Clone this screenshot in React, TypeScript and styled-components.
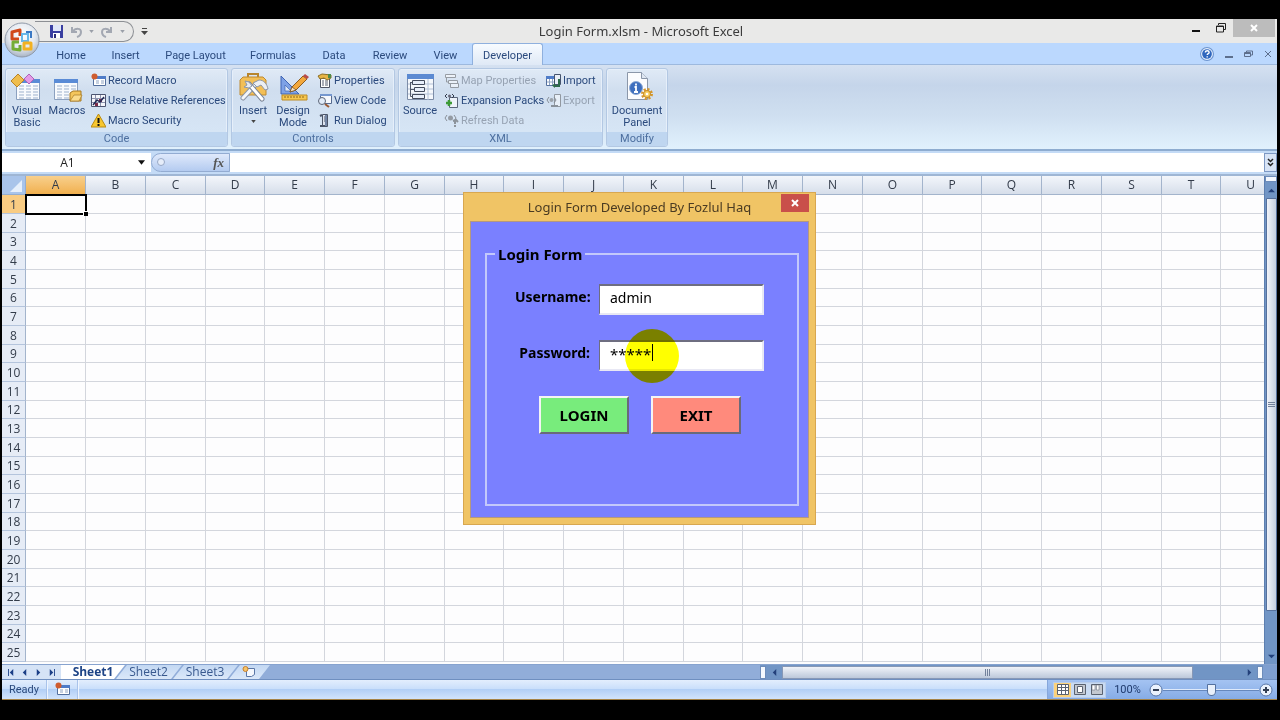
import React from "react";
import styled, { createGlobalStyle, css } from "styled-components";

const ui = `Roboto, "Open Sans", sans-serif`;
const caption = `"Noto Sans", "Open Sans", sans-serif`;
const grid = `"Open Sans", "Noto Sans", sans-serif`;

const Global = createGlobalStyle`
  *, *::before, *::after { box-sizing: border-box; }
  body { margin: 0; background: #000; font-family: ${ui}; font-size: 11px; color: #2b4a7d; }
  button, input { font: inherit; color: inherit; margin: 0; padding: 0; border: 0; background: none; border-radius: 0; }
  button { cursor: pointer; }
  svg { display: block; flex: none; }
`;

const Screen = styled.div`
  min-height: 100vh;
  padding: 19px 3px 20px 2px;
  display: flex;
  flex-direction: column;
  position: relative;
  overflow: hidden;
`;

/* ---------- title bar ---------- */
const TitleBar = styled.header`
  height: 24px;
  display: grid;
  grid-template-columns: 1fr auto 1fr;
  background: #e9e9e8;
`;
const QuickAccess = styled.div`
  display: flex;
  align-items: center;
  padding-left: 33px;
`;
const QuickPill = styled.div`
  height: 21px;
  width: 99px;
  display: flex;
  align-items: center;
  gap: 7px;
  padding-left: 15px;
  border: 1px solid #8c8f94;
  border-left: 0;
  border-radius: 0 11px 11px 0;
  margin-right: 7px;
`;
const WindowTitle = styled.h1`
  margin: 0;
  padding-left: 3px;
  font: 400 13px/25px ${caption};
  color: #3c3c3c;
`;
const WindowButtons = styled.div`
  display: flex;
  justify-content: flex-end;
  padding-right: 2px;
`;
const WindowButton = styled.button<{ $close?: boolean }>`
  height: 18px;
  width: ${(p) => (p.$close ? 42 : 25)}px;
  display: grid;
  place-items: center;
  background: ${(p) => (p.$close ? "#bcbcbc" : "transparent")};
`;
const OfficeButton = styled.button`
  position: absolute;
  left: 4px;
  top: 22px;
  width: 36px;
  height: 36px;
`;

/* ---------- ribbon ---------- */
const TabRow = styled.nav`
  height: 22px;
  display: flex;
  align-items: stretch;
  background: #bbd8fe;
  border-bottom: 1px solid #9db9de;
  padding-left: 41px;
`;
const Tab = styled.button<{ $w: number; $active?: boolean }>`
  width: ${(p) => p.$w}px;
  height: 22px;
  padding-top: 3px;
  white-space: nowrap;
  ${(p) =>
    p.$active &&
    css`
      padding-top: 2px;
      background: linear-gradient(#f7fbff, #dfe9f6);
      border: 1px solid #8fb0de;
      border-bottom: 0;
      border-radius: 3px 3px 0 0;
    `}
`;
const TabTools = styled.div`
  margin-left: auto;
  display: flex;
  align-items: center;
  gap: 11px;
  padding-right: 5px;
`;
const Ribbon = styled.section`
  height: 84px;
  display: flex;
  gap: 3px;
  padding: 3px;
  background: linear-gradient(#d5e1f1 0, #c5d5ea 24%, #cfdff0 60%, #e1f1fd 100%);
`;
const Group = styled.div<{ $w: number }>`
  width: ${(p) => p.$w}px;
  height: 79px;
  display: flex;
  flex-direction: column;
  border: 1px solid #b3c8e3;
  border-radius: 3px;
  background: linear-gradient(#e0eaf6 0, #d0deef 28%, #d6e5f5 80%);
  box-shadow: inset 0 0 0 1px #e6effa;
  overflow: hidden;
`;
const GroupBody = styled.div`
  flex: 1;
  display: flex;
  padding: 1px;
`;
const GroupLabel = styled.div`
  height: 14px;
  line-height: 13px;
  text-align: center;
  color: #4d6f9f;
  background: #bfd6f0;
`;
const BigButton = styled.button<{ $w?: number }>`
  width: ${(p) => p.$w ?? 40}px;
  display: flex;
  flex-direction: column;
  align-items: center;
  line-height: 12px;
  padding-top: 2px;
  gap: 3px;
`;
const SmallColumn = styled.div<{ $w: number }>`
  width: ${(p) => p.$w}px;
  padding-left: 4px;
  display: flex;
  flex-direction: column;
`;
const SmallButton = styled.button`
  height: 20px;
  display: flex;
  align-items: center;
  gap: 2px;
  white-space: nowrap;
  &:disabled { color: #97a3b3; opacity: 1; }
  &:disabled svg { filter: grayscale(1); opacity: 0.5; }
`;

/* ---------- formula bar ---------- */
const FormulaBar = styled.div`
  height: 27px;
  display: flex;
  align-items: stretch;
  padding: 4px 0;
  background: linear-gradient(#8eacd0 0 2px, #c4dbf6 2px 25px, #9fb6d4 25px);
`;
const NameBox = styled.div`
  width: 149px;
  display: flex;
  align-items: center;
  gap: 5px;
  background: #fff;
  color: #222;
`;
const NameInput = styled.input`
  width: 131px;
  text-align: center;
  font: 400 12px/16px ${grid};
`;
const FxArea = styled.div`
  width: 79px;
  display: flex;
  align-items: center;
  justify-content: space-between;
  padding: 0 5px 0 4px;
  background: linear-gradient(#dfe9fb, #b4cbf0);
  border: 1px solid #93acd2;
  border-radius: 10px 0 0 10px;
`;
const FxButton = styled.button`
  font: italic 700 13px/16px "Liberation Serif", serif;
  color: #555;
`;
const FormulaInput = styled.input`
  flex: 1;
  min-width: 0;
  background: #fff;
`;
const ExpandButton = styled.button`
  width: 13px;
  display: grid;
  place-items: center;
  border: 1px solid #7d98c3;
  background: #d8e4f6;
`;

/* ---------- sheet ---------- */
const SheetArea = styled.main`
  flex: 1 1 0;
  min-height: 488px;
  display: flex;
  background: #fdfdfe;
`;
const GridClip = styled.div`
  flex: 1;
  min-width: 0;
  height: 488px;
  overflow: hidden;
`;
const Grid = styled.table`
  width: 1279px;
  table-layout: fixed;
  border-collapse: separate;
  border-spacing: 0;
  font-family: ${grid};
  font-size: 12px;
  color: #333c4a;
`;
const Col = styled.col<{ $w: number }>`
  width: ${(p) => p.$w}px;
`;
const ColHead = styled.th<{ $on?: boolean }>`
  height: 19px;
  padding: 0;
  font-weight: 400;
  line-height: 18px;
  border-right: 1px solid #a3b4cc;
  border-bottom: 1px solid #a3b4cc;
  background: ${(p) => (p.$on ? "linear-gradient(#f8d08d, #f1b04f)" : "linear-gradient(#f3f6fb, #d6deea)")};
`;
const Corner = styled.td`
  padding: 0;
  background: #a9c4ea;
  border-right: 1px solid #94add0;
  border-bottom: 1px solid #94add0;
`;
const Row = styled.tr`
  height: 19px;
  &:nth-child(3n) { height: 18px; }
`;
const RowHead = styled.th<{ $on?: boolean }>`
  padding: 0;
  font-weight: 400;
  line-height: 17px;
  border-right: 1px solid #a3b4cc;
  border-bottom: 1px solid #b4c4dc;
  background: ${(p) => (p.$on ? "#f9cc83" : "#e6ecf6")};
`;
const Cell = styled.td<{ $on?: boolean }>`
  padding: 0;
  border-right: 1px solid #d3d6dd;
  border-bottom: 1px solid #d3d6dd;
  ${(p) =>
    p.$on &&
    css`
      position: relative;
      outline: 2px solid #000;
      outline-offset: -1px;
      &::after {
        content: "";
        position: absolute;
        right: -3px;
        bottom: -3px;
        width: 5px;
        height: 5px;
        background: #000;
        border: 1px solid #fff;
        border-width: 1px 0 0 1px;
      }
    `}
`;
const VScroll = styled.div`
  width: 13px;
  display: flex;
  flex-direction: column;
  align-items: center;
  background: #7195c5;
  border-left: 1px solid #5d7fb0;
`;
const SplitBox = styled.div<{ $vertical?: boolean }>`
  background: #f4f8fe;
  border: 1px solid #6d8cba;
  width: ${(p) => (p.$vertical ? "6px" : "100%")};
  height: ${(p) => (p.$vertical ? "13px" : "6px")};
`;
const ArrowButton = styled.button`
  width: 16px;
  height: 16px;
  display: grid;
  place-items: center;
  color: #23407a;
`;
const VThumb = styled.div`
  width: 11px;
  flex: 412 1 0;
  display: grid;
  place-items: center;
  border: 1px solid #56719d;
  border-radius: 1px;
  background: linear-gradient(90deg, #f1f4fa, #c3cedf);
`;
const VRest = styled.div`
  flex: 37 1 0;
`;

/* ---------- sheet tabs ---------- */
const BottomRow = styled.div`
  height: 15px;
  display: flex;
  background: #91add9;
  border-top: 1px solid #87a3cf;
`;
const NavArrows = styled.div`
  width: 59px;
  display: flex;
  justify-content: space-between;
  align-items: center;
  padding: 0 3px;
  background: #d5e3f6;
  color: #1c3f86;
`;
const NavButton = styled.button`
  width: 12px;
  height: 13px;
  display: grid;
  place-items: center;
`;
const SheetTab = styled.button<{ $w: number; $active?: boolean }>`
  width: ${(p) => p.$w}px;
  height: 14px;
  margin-right: -10px;
  font: ${(p) => (p.$active ? 700 : 400)} 12px/12px ${grid};
  color: ${(p) => (p.$active ? "#1e4486" : "#39598e")};
  background: ${(p) => (p.$active ? "#fff" : "linear-gradient(#c3d8f3, #dbe8f9)")};
  clip-path: polygon(0 0, 100% 0, calc(100% - 11px) 100%, 0 100%);
  padding: 0 7px 1px;
  position: relative;
  z-index: ${(p) => (p.$active ? 4 : 1)};
  display: grid;
  place-items: center;
  &:not(:first-of-type) { clip-path: polygon(12px 0, 100% 0, calc(100% - 11px) 100%, 1px 100%); }
`;
const HScroll = styled.div`
  margin-left: auto;
  width: 40%;
  max-width: 503px;
  display: flex;
  align-items: center;
  background: #7195c5;
`;
const HThumb = styled.div`
  flex: 410 1 0;
  height: 13px;
  display: grid;
  place-items: center;
  border: 1px solid #8798b6;
  background: linear-gradient(#f0f3f9, #bcc8da);
`;
const HRest = styled.div`
  flex: 48 1 0;
`;
const ScrollCorner = styled.div`
  width: 14px;
  background: #7f9fd0;
`;

/* ---------- status bar ---------- */
const StatusBar = styled.footer`
  height: 21px;
  display: flex;
  align-items: stretch;
  background: linear-gradient(#e3eefd 0, #cadffb 45%, #b2cff6 50%, #cfe2fc 95%);
  border-top: 1px solid #6f8fc0;
  border-bottom: 1px solid #a58347;
`;
const StatusCell = styled.div<{ $w: number }>`
  width: ${(p) => p.$w}px;
  display: grid;
  place-items: center;
  border-right: 1px solid #a9c3ea;
  box-shadow: 1px 0 0 #eef5ff;
`;
const StatusTools = styled.div`
  margin-left: auto;
  display: flex;
  align-items: center;
  padding: 0 4px 0 5px;
  background: linear-gradient(#a4c3f2, #86ace6);
  border-left: 1px solid #86a7db;
`;
const Views = styled.div`
  display: flex;
  height: 16px;
  border: 1px solid #b9cdea;
  background: #c9dbf3;
`;
const ViewButton = styled.button<{ $active?: boolean }>`
  width: 17px;
  height: 14px;
  display: grid;
  place-items: center;
  background: ${(p) => (p.$active ? "#fbd27c" : "transparent")};
`;
const Zoom = styled.label`
  width: 43px;
  text-align: center;
  color: #1f3a6d;
`;
const RoundButton = styled.button`
  width: 14px;
  height: 14px;
  display: grid;
  place-items: center;
`;
const Slider = styled.input`
  appearance: none;
  width: 96px;
  height: 14px;
  background: linear-gradient(transparent 6px, #dfeafb 6px 7px, #6688bd 7px 8px, transparent 8px);
  &::-webkit-slider-thumb {
    appearance: none;
    width: 9px;
    height: 12px;
    background: #e9f0fb;
    border: 1px solid #54719f;
    border-radius: 1px 1px 5px 5px;
  }
`;

/* ---------- login dialog ---------- */
const Dialog = styled.section`
  position: absolute;
  left: 50%;
  top: 192px;
  width: 353px;
  margin-left: -177px;
  padding: 0 6px 6px;
  background: #f0c465;
  border: 1px solid #d8a750;
  font-family: ${caption};
  color: #000;
`;
const DialogTitle = styled.div`
  height: 28px;
  position: relative;
  display: flex;
  justify-content: center;
`;
const DialogName = styled.h2`
  margin: 0;
  font: 400 13px/28px ${caption};
  color: #4a3b22;
  white-space: nowrap;
`;
const DialogClose = styled.button`
  position: absolute;
  right: 0;
  top: 1px;
  width: 28px;
  height: 18px;
  display: grid;
  place-items: center;
  background: #c9504a;
`;
const DialogBody = styled.form`
  padding: 23px 9px 11px 14px;
  background: #7a80ff;
  border: 1px solid #b5987f;
`;
const Frame = styled.fieldset`
  margin: 0;
  min-width: 0;
  height: 261px;
  padding: 21px 0 0 28px;
  border: 2px solid #c3c8fb;
`;
const Legend = styled.legend`
  margin-left: -20px;
  padding: 0 3px;
  font-size: 15px;
  font-weight: 700;
  line-height: 18px;
`;
const Field = styled.div`
  height: 31px;
  margin-bottom: 25px;
  display: flex;
  align-items: flex-start;
  position: relative;
`;
const FieldLabel = styled.label`
  width: 75px;
  margin-right: 9px;
  text-align: right;
  font-size: 14px;
  font-weight: 700;
  line-height: 26px;
  white-space: nowrap;
`;
const TextBox = styled.input<{ $masked?: boolean }>`
  width: 165px;
  height: 31px;
  padding: 0 8px 4px 10px;
  font-size: ${(p) => (p.$masked ? 15 : 14)}px;
  line-height: 24px;
  background: #fff;
  border: solid;
  border-width: 2px 2px 2px 1px;
  border-color: #6e6e80 #e8e8f4 #e8e8f4 #6e6e80;
`;
const Spot = styled.span`
  position: absolute;
  left: 110px;
  top: -11px;
  width: 54px;
  height: 54px;
  border-radius: 50%;
  background: #ff0;
  mix-blend-mode: multiply;
  pointer-events: none;
`;
const Caret = styled.span`
  position: absolute;
  left: 137px;
  top: 4px;
  width: 1px;
  height: 17px;
  background: #000;
`;
const Actions = styled.div`
  display: flex;
  gap: 22px;
  padding-left: 24px;
`;
const ActionButton = styled.button<{ $tone: string }>`
  width: 90px;
  height: 38px;
  font-size: 15px;
  font-weight: 700;
  line-height: 18px;
  background: ${(p) => p.$tone};
  border: 2px solid;
  border-color: #f4f4f4 #6a6a7a #6a6a7a #f4f4f4;
`;

/* ---------- drawings ---------- */
const Orb = () => (
  <svg width="36" height="36" viewBox="0 0 36 36" fill="none">
    <defs>
      <radialGradient id="orb" cx="50%" cy="35%" r="65%">
        <stop offset="0" stopColor="#fff" />
        <stop offset="0.6" stopColor="#e4e9f0" />
        <stop offset="1" stopColor="#a9b4c4" />
      </radialGradient>
    </defs>
    <circle cx="18" cy="18" r="17" fill="url(#orb)" stroke="#8f99a8" />
    <path d="M15 17h-7V10l8-2v6" stroke="#d1491b" strokeWidth="3" strokeLinejoin="round" />
    <path d="M18 12h6v7h-6z" stroke="#69b7e8" strokeWidth="2" />
    <path d="M15 20H9v7l7 1v-5" stroke="#74ad35" strokeWidth="3" strokeLinejoin="round" />
    <path d="M20 21h7v6h-7z" stroke="#f2b122" strokeWidth="3" strokeLinejoin="round" />
    <path d="M22 10h5v6" stroke="#3c79c4" strokeWidth="2" />
  </svg>
);
const Save = () => (
  <svg width="13" height="13" viewBox="0 0 13 13">
    <path d="M0 0h13v13H1l-1-1z" fill="#3a3fa0" />
    <path d="M3 0h8v6H3z" fill="#dfe6f8" />
    <path d="M3 8h7v5H3z" fill="#fff" />
    <path d="M4 9h2v4H4z" fill="#2a2d78" />
  </svg>
);
const Undo = ({ flip }: { flip?: boolean }) => (
  <svg width="12" height="12" viewBox="0 0 12 12" fill="none" stroke="#a3a8b2" strokeWidth="2">
    <g transform={flip ? "matrix(-1 0 0 1 12 0)" : undefined}>
      <path d="M2 1v5h5M3 5c3-3 8-3 8 1 0 2-1 4-4 5" />
    </g>
  </svg>
);
const Down = ({ c = "#444", s = 5 }: { c?: string; s?: number }) => (
  <svg width={s} height={s - 2} viewBox="0 0 6 4"><path d="M0 0h6L3 4z" fill={c} /></svg>
);
const More = () => (
  <svg width="7" height="8" viewBox="0 0 7 8" fill="#444"><path d="M1 0h5v1H1zM0 3h7L3.500 7z" /></svg>
);
const Cross = ({ c, s = 8, w = 2 }: { c: string; s?: number; w?: number }) => (
  <svg width={s} height={s} viewBox="0 0 8 8" stroke={c} strokeWidth={w}><path d="M1 1l6 6M7 1L1 7" /></svg>
);
const Dash = ({ c = "#111" }: { c?: string }) => (
  <svg width="8" height="10" viewBox="0 0 8 10"><path d="M0 7h8v2H0z" fill={c} /></svg>
);
const Restore = () => (
  <svg width="10" height="10" viewBox="0 0 10 10" fill="none" stroke="#222"><path d="M0.500 3h7v6h-7zM0.500 3.500h7M2.500 2V0.500h7v6H8" /></svg>
);
const SmallRestore = () => (
  <svg width="9" height="8" viewBox="0 0 9 8" fill="none" stroke="#5d6f8d"><path d="M0.500 2.500h6v4h-6zM1 3.500h5M2.500 2V1h6v4H7" /></svg>
);
const Help = () => (
  <svg width="14" height="14" viewBox="0 0 13 13" fill="none">
    <circle cx="6.500" cy="6.500" r="6" fill="#e7f0fd" stroke="#6c94cf" />
    <circle cx="6.500" cy="6.500" r="4.500" fill="#2f66bd" />
    <path d="M5 5c0-2 3.500-2 3.500 0C8.500 6.300 6.700 6 6.700 7.500M6.700 8.700v1" stroke="#fff" strokeWidth="1.300" />
  </svg>
);
const tableArt = (
  <>
    <path d="M5.500 7.500h23v20h-23z" fill="#f8fafd" stroke="#8ba0bf" />
    <path d="M5 7h24v4H5z" fill="#5a8bd6" />
    <path d="M8 14h5M8 17h5M8 20h5M8 23h5M8 26h5M15 14h5M15 17h5M15 20h5M15 23h5M15 26h5M22 14h5M22 17h5M22 20h5M22 23h5M22 26h5" stroke="#9db1cd" />
  </>
);
const VisualBasic = () => (
  <svg width="32" height="30" viewBox="0 0 32 30">
    {tableArt}
    <path d="M7 2l6 6-7 7-6-6z" fill="#efbd4d" stroke="#b98327" />
    <path d="M18 2l5 5-5 5-5-5z" fill="#e39be6" stroke="#ae62b8" />
  </svg>
);
const Macros = () => (
  <svg width="32" height="30" viewBox="0 0 32 30">
    <g transform="translate(-2 0)">{tableArt}</g>
    <path d="M19 21l3-2h8v10H19z" fill="#f4c65c" stroke="#a87a22" />
    <path d="M19 29l4-6h8l-3 6z" fill="#fbdc8c" stroke="#a87a22" strokeWidth="0.700" />
  </svg>
);
const Toolbox = () => (
  <svg width="32" height="30" viewBox="0 0 32 30" fill="none">
    <path d="M11 5V2h10v3" stroke="#b8862e" strokeWidth="2" />
    <path d="M3 8l3-3h20l3 3v15H3z" fill="#f3bf56" stroke="#bf8a30" />
    <path d="M6 26L19 12" stroke="#8d97a8" strokeWidth="5" strokeLinecap="round" />
    <path d="M6 26L19 12" stroke="#f4f6f9" strokeWidth="3" strokeLinecap="round" />
    <path d="M12 12l13 15" stroke="#7d8797" strokeWidth="5" strokeLinecap="round" />
    <path d="M12 12l13 15" stroke="#fff" strokeWidth="3" strokeLinecap="round" />
    <path d="M8 9l4 1 3 4-3 2-5-1 3-2z" fill="#e8ebf1" stroke="#8d97a8" />
    <path d="M16 11l6-3c5 0 8 4 9 9l-3 1-4-5-4 2z" fill="#eceff4" stroke="#8d97a8" />
  </svg>
);
const DesignMode = () => (
  <svg width="32" height="30" viewBox="0 0 32 30">
    <path d="M4 4l18 18H4z" fill="#7ea2e6" stroke="#3f64b4" />
    <path d="M8 13l6 6H8z" fill="#dce8f8" stroke="#3f64b4" strokeWidth="0.700" />
    <path d="M5 23h25v5H5z" fill="#f6c750" stroke="#bd8c25" />
    <path d="M8 24v2M11 24v2M14 24v2M17 24v2M20 24v2M23 24v2M26 24v2" stroke="#8f6718" />
    <path d="M13 20l2-5L26 4l4 3-11 11z" fill="#f3a83c" stroke="#8e5c1e" />
    <path d="M26 4l2-2 4 3-2 2z" fill="#b84b4b" />
    <path d="M13 20l2-5 4 3z" fill="#f7e2c2" stroke="#6c4a20" strokeWidth="0.700" />
  </svg>
);
const Source = () => (
  <svg width="32" height="30" viewBox="0 0 32 30" fill="none">
    <path d="M3.500 2.500h26v25h-26z" fill="#f5f8fc" stroke="#7d8da8" />
    <path d="M3 2h27v5H3z" fill="#5b8ad2" />
    <path d="M24 7v21M4 12h25M4 17h25M4 22h25" stroke="#b4c2d8" />
    <path d="M6.500 10v14.500M6.500 10.500h3M6.500 17.500h4M6.500 24.500h3" stroke="#51586a" />
    <path d="M8.500 8.500h12v4h-12zM10.500 15.500h10v4h-10zM8.500 22.500h12v4h-12z" fill="#e7eefa" stroke="#444c5e" />
  </svg>
);
const DocPanel = () => (
  <svg width="32" height="30" viewBox="0 0 32 30" fill="none">
    <path d="M6.500 0.500h14l6 6v21h-20z" fill="#fbfcfe" stroke="#8b97a9" />
    <path d="M20.500 0.500v6h6" fill="#dfe7f2" stroke="#8b97a9" />
    <circle cx="15" cy="16" r="6.500" fill="#3e6fbe" stroke="#8fabd6" />
    <path d="M15 11.500v2M13.500 15h1.500v5M13 20h4" stroke="#fff" strokeWidth="1.800" />
    <circle cx="26" cy="22" r="4.500" stroke="#d5972b" strokeWidth="3" strokeDasharray="2 1.500" />
    <circle cx="26" cy="22" r="3.500" fill="#f7cf62" stroke="#c58a24" />
    <circle cx="26" cy="22" r="1.300" fill="#fff" />
  </svg>
);

type Glyph = "record" | "relative" | "warn" | "props" | "code" | "run" | "map" | "pack" | "refresh" | "import" | "export";
const glyphs: Record<Glyph, React.ReactNode> = {
  record: (
    <>
      <path d="M2.500 3.500h12v9h-12z" fill="#fff" stroke="#54709e" /><path d="M2 3h13v3H2z" fill="#4f7cc8" />
      <path d="M5 8h3M5 10h3M10 8h3M10 10h3" stroke="#8ea3c2" /><circle cx="3.500" cy="3.500" r="3" fill="#cf5c2f" />
    </>
  ),
  relative: (
    <>
      <path d="M0.500 1.500h14v12h-14z" fill="#f5f6fa" stroke="#4c5470" /><path d="M4.500 2v11M9.500 2v11M1 5.500h13M1 9.500h13" stroke="#8d93ad" />
      <path d="M4 10h3v3H4zM8 6h3v3H8z" fill="#7c2d4a" /><path d="M2 12l4-5 3 2 4-5" stroke="#222b55" strokeWidth="1.500" />
    </>
  ),
  warn: (
    <>
      <path d="M7.500 1L15 14H0z" fill="#f8c72f" stroke="#b88a12" strokeLinejoin="round" /><path d="M7.500 5v5M7.500 11v2" stroke="#111" strokeWidth="2" />
    </>
  ),
  props: (
    <>
      <path d="M3.500 5.500h9v9h-9z" fill="#fff" stroke="#4e5566" /><path d="M5 8h2M5 10h2M5 12h2M8 8h3M8 10h3M8 12h3" stroke="#555d70" />
      <path d="M1 3l4-2 9 1v3l-4 2-3-2-4 1z" fill="#e6b445" stroke="#8d7026" /><path d="M11 1h3v4h-3z" fill="#4e8a46" />
    </>
  ),
  code: (
    <>
      <path d="M3.500 1.500h11v9h-11z" fill="#f7f9fd" stroke="#566b90" /><path d="M3 1h12v2H3z" fill="#7597cf" />
      <circle cx="5" cy="8" r="3.500" fill="#e2ecf9" stroke="#5c6577" /><path d="M8 11l4 3" stroke="#9b5a33" strokeWidth="2" />
    </>
  ),
  run: (
    <>
      <path d="M5.500 1.500h5v12h-5z" fill="#dde3ee" stroke="#4d5668" /><path d="M7 4h2M7 6h2M7 8h2" stroke="#4d5668" />
      <path d="M3 3l2-1M3 13h6" stroke="#4d5668" strokeWidth="2" /><path d="M9 2v11" stroke="#7486a5" strokeWidth="2" />
    </>
  ),
  map: (
    <>
      <path d="M1.500 1.500h10v3h-10zM4.500 7.500h9v3h-9zM6.500 10.500h8v4h-8z" fill="#fff" stroke="#4f5668" /><path d="M2.500 5v4h2" stroke="#4f5668" />
    </>
  ),
  pack: (
    <>
      <path d="M5.500 4.500h8v10h-8z" fill="#eef3fa" stroke="#596579" /><path d="M3 1L1 3l2 2M8 1l2 2-2 2" stroke="#333b4d" /><circle cx="5.500" cy="3" r="1.500" fill="#667" />
      <path d="M5 7v6M2 10h6" stroke="#3c9a36" strokeWidth="2.500" />
    </>
  ),
  refresh: (
    <>
      <path d="M3 2L1 5l2 3M10 2l2 3-2 3" stroke="#333b4d" /><circle cx="6.500" cy="5" r="2.500" fill="#556" />
      <path d="M11 7v4M11 12v2M9 8l3-1 2 2" stroke="#445" strokeWidth="2" />
    </>
  ),
  import: (
    <>
      <path d="M0.500 3.500h9v9h-9z" fill="#fff" stroke="#54709e" /><path d="M0 3h10v3H0z" fill="#4f7cc8" /><path d="M3.500 6v6M6.500 6v6M1 9h8" stroke="#8ea3c2" />
      <path d="M8.500 1.500h6v10h-6z" fill="#e9eff8" stroke="#46546e" /><path d="M13 6v7H8" stroke="#2f6b4b" strokeWidth="2" /><path d="M9 10v5l-3-2.500z" fill="#2f6b4b" />
    </>
  ),
  export: (
    <>
      <path d="M8.500 1.500h6v12h-6z" fill="#fff" stroke="#46546e" /><path d="M3 4L1 7l2 3M8 4l2 3-2 3" stroke="#333b4d" /><circle cx="5.500" cy="7" r="2" fill="#667" />
      <path d="M5 13h7" stroke="#445" strokeWidth="2" />
    </>
  ),
};
const Icon = ({ name }: { name: Glyph }) => (
  <svg width="15" height="15" viewBox="0 0 15 15" fill="none">{glyphs[name]}</svg>
);

const Triangle = ({ dir, bar }: { dir: "l" | "r" | "u" | "d"; bar?: boolean }) => {
  const shapes = { l: "M6 0v8L2 4z", r: "M2 0v8l4-4z", u: "M0 6h8L4 2z", d: "M0 2h8L4 6z" };
  return (
    <svg width="7" height="7" viewBox="0 0 8 8" fill="currentColor">
      <path d={shapes[dir]} />
      {bar && <path d={dir === "l" ? "M0 0h1v8H0z" : "M7 0h1v8H7z"} />}
    </svg>
  );
};
const Grip = ({ turned }: { turned?: boolean }) => (
  <svg width="7" height="7" viewBox="0 0 7 7" stroke="#73829c">
    <path d={turned ? "M0 1.500h7M0 3.500h7M0 5.500h7" : "M1.500 0v7M3.500 0v7M5.500 0v7"} />
  </svg>
);
const ViewIcon = ({ kind }: { kind: number }) => (
  <svg width="12" height="11" viewBox="0 0 12 11" fill="none" stroke="#5a6270">
    <path d="M0.500 0.500h11v10h-11z" fill={kind === 0 ? "#fff" : "#c3c8d0"} />
    {kind === 0 && <path d="M1 3.500h10M1 6.500h10M4.500 1v9M8.500 1v9" />}
    {kind === 1 && <path d="M3.500 2.500h5v6h-5z" fill="#fff" />}
    {kind === 2 && <path d="M1 1h3v5H1zM5.500 1h2.500v5H5.500z" fill="#fff" strokeWidth="0.500" />}
  </svg>
);
const RoundSign = ({ plus }: { plus?: boolean }) => (
  <svg width="14" height="14" viewBox="0 0 14 14" fill="none" stroke="#5a77a8">
    <circle cx="7" cy="7" r="6" fill="#eaf2fd" />
    <path d={plus ? "M4 7h6M7 4v6" : "M4 7h6"} stroke="#333f55" strokeWidth="2" />
  </svg>
);
const NewSheet = () => (
  <svg width="14" height="12" viewBox="0 0 14 12" fill="none">
    <path d="M4.500 2.500h8v6l-3 2h-5z" fill="#f5f8fd" stroke="#5a76a6" />
    <circle cx="3.500" cy="3" r="2.500" fill="#f5c46a" stroke="#c77f2c" />
  </svg>
);

const letters = "ABCDEFGHIJKLMNOPQRSTU".split("");
const rows = Array.from({ length: 25 }, (_, i) => i + 1);
const views = ["Normal", "Page Layout", "Page Break Preview"];
const tabs: [string, number][] = [
  ["Home", 56], ["Insert", 53], ["Page Layout", 87], ["Formulas", 68],
  ["Data", 54], ["Review", 58], ["View", 53], ["Developer", 71],
];

const Small = ({ icon, text, off }: { icon: Glyph; text: string; off?: boolean }) => (
  <SmallButton disabled={off}><Icon name={icon} />{text}</SmallButton>
);

export default function App() {
  return (
    <Screen>
      <Global />
      <TitleBar>
        <QuickAccess>
          <QuickPill>
            <Save /><Undo /><Down c="#9a9fa8" /><Undo flip /><Down c="#9a9fa8" />
          </QuickPill>
          <More />
        </QuickAccess>
        <WindowTitle>Login Form.xlsm - Microsoft Excel</WindowTitle>
        <WindowButtons>
          <WindowButton aria-label="Minimize"><Dash /></WindowButton>
          <WindowButton aria-label="Restore"><Restore /></WindowButton>
          <WindowButton $close aria-label="Close"><Cross c="#fff" /></WindowButton>
        </WindowButtons>
      </TitleBar>
      <TabRow>
        {tabs.map(([name, w]) => (
          <Tab key={name} $w={w} $active={name === "Developer"}>{name}</Tab>
        ))}
        <TabTools>
          <Help /><Dash c="#5d6f8d" /><SmallRestore /><Cross c="#5d6f8d" w={1} />
        </TabTools>
      </TabRow>
      <OfficeButton aria-label="Office Button"><Orb /></OfficeButton>

      <Ribbon>
        <Group $w={223}>
          <GroupBody>
            <BigButton><VisualBasic />Visual Basic</BigButton>
            <BigButton><Macros />Macros</BigButton>
            <SmallColumn $w={138}>
              <Small icon="record" text="Record Macro" />
              <Small icon="relative" text="Use Relative References" />
              <Small icon="warn" text="Macro Security" />
            </SmallColumn>
          </GroupBody>
          <GroupLabel>Code</GroupLabel>
        </Group>
        <Group $w={164}>
          <GroupBody>
            <BigButton><Toolbox />Insert<Down /></BigButton>
            <BigButton><DesignMode />Design Mode</BigButton>
            <SmallColumn $w={80}>
              <Small icon="props" text="Properties" />
              <Small icon="code" text="View Code" />
              <Small icon="run" text="Run Dialog" />
            </SmallColumn>
          </GroupBody>
          <GroupLabel>Controls</GroupLabel>
        </Group>
        <Group $w={205}>
          <GroupBody>
            <BigButton><Source />Source</BigButton>
            <SmallColumn $w={102}>
              <Small icon="map" text="Map Properties" off />
              <Small icon="pack" text="Expansion Packs" />
              <Small icon="refresh" text="Refresh Data" off />
            </SmallColumn>
            <SmallColumn $w={58}>
              <Small icon="import" text="Import" />
              <Small icon="export" text="Export" off />
            </SmallColumn>
          </GroupBody>
          <GroupLabel>XML</GroupLabel>
        </Group>
        <Group $w={62}>
          <GroupBody>
            <BigButton $w={58}><DocPanel />Document Panel</BigButton>
          </GroupBody>
          <GroupLabel>Modify</GroupLabel>
        </Group>
      </Ribbon>

      <FormulaBar>
        <NameBox>
          <NameInput aria-label="Name box" defaultValue="A1" />
          <Down c="#111" s={7} />
        </NameBox>
        <FxArea>
          <svg width="10" height="12" viewBox="0 0 10 12" fill="none" stroke="#97a8c6"><circle cx="5" cy="5" r="3.500" fill="#e6edf9" /></svg>
          <FxButton>fx</FxButton>
        </FxArea>
        <FormulaInput aria-label="Formula" />
        <ExpandButton aria-label="Expand formula bar">
          <svg width="7" height="9" viewBox="0 0 7 9" fill="none" stroke="#222" strokeWidth="1.500"><path d="M1 1l2.500 2.500L6 1M1 5l2.500 2.500L6 5" /></svg>
        </ExpandButton>
      </FormulaBar>

      <SheetArea>
        <GridClip>
          <Grid>
            <colgroup>
              <Col $w={24} />
              {letters.map((l, i) => <Col key={l} $w={i % 4 === 3 ? 59 : 60} />)}
            </colgroup>
            <thead>
              <tr>
                <Corner>
                  <svg width="23" height="17" viewBox="0 0 23 17"><path d="M20 3v12H8z" fill="#e6effb" /></svg>
                </Corner>
                {letters.map((l) => <ColHead key={l} $on={l === "A"} scope="col">{l}</ColHead>)}
              </tr>
            </thead>
            <tbody>
              {rows.map((r) => (
                <Row key={r}>
                  <RowHead $on={r === 1} scope="row">{r}</RowHead>
                  {letters.map((l) => <Cell key={l} $on={r === 1 && l === "A"} />)}
                </Row>
              ))}
            </tbody>
          </Grid>
        </GridClip>
        <VScroll>
          <SplitBox />
          <ArrowButton aria-label="Scroll up"><Triangle dir="u" /></ArrowButton>
          <VThumb><Grip turned /></VThumb>
          <VRest />
          <ArrowButton aria-label="Scroll down"><Triangle dir="d" /></ArrowButton>
        </VScroll>
      </SheetArea>

      <BottomRow>
        <NavArrows>
          <NavButton aria-label="First sheet"><Triangle dir="l" bar /></NavButton>
          <NavButton aria-label="Previous sheet"><Triangle dir="l" /></NavButton>
          <NavButton aria-label="Next sheet"><Triangle dir="r" /></NavButton>
          <NavButton aria-label="Last sheet"><Triangle dir="r" bar /></NavButton>
        </NavArrows>
        <SheetTab $w={64} $active>Sheet1</SheetTab>
        <SheetTab $w={67}>Sheet2</SheetTab>
        <SheetTab $w={66}>Sheet3</SheetTab>
        <SheetTab $w={42} aria-label="Insert sheet"><NewSheet /></SheetTab>
        <HScroll>
          <SplitBox $vertical />
          <ArrowButton aria-label="Scroll left"><Triangle dir="l" /></ArrowButton>
          <HThumb><Grip /></HThumb>
          <HRest />
          <ArrowButton aria-label="Scroll right"><Triangle dir="r" /></ArrowButton>
          <SplitBox $vertical />
        </HScroll>
        <ScrollCorner />
      </BottomRow>

      <StatusBar>
        <StatusCell $w={45}>Ready</StatusCell>
        <StatusCell $w={31}><Icon name="record" /></StatusCell>
        <StatusTools>
          <Views>
            {views.map((v, k) => (
              <ViewButton key={v} $active={k === 0} aria-label={v}><ViewIcon kind={k} /></ViewButton>
            ))}
          </Views>
          <Zoom htmlFor="zoom">100%</Zoom>
          <RoundButton aria-label="Zoom out"><RoundSign /></RoundButton>
          <Slider id="zoom" type="range" defaultValue={50} />
          <RoundButton aria-label="Zoom in"><RoundSign plus /></RoundButton>
        </StatusTools>
      </StatusBar>

      <Dialog role="dialog" aria-labelledby="dialog-name">
        <DialogTitle>
          <DialogName id="dialog-name">Login Form Developed By Fozlul Haq</DialogName>
          <DialogClose aria-label="Close"><Cross c="#fff" /></DialogClose>
        </DialogTitle>
        <DialogBody>
          <Frame>
            <Legend>Login Form</Legend>
            <Field>
              <FieldLabel htmlFor="username">Username:</FieldLabel>
              <TextBox id="username" defaultValue="admin" />
            </Field>
            <Field>
              <FieldLabel htmlFor="password">Password:</FieldLabel>
              <TextBox id="password" $masked defaultValue="*****" autoComplete="off" />
              <Caret />
              <Spot />
            </Field>
            <Actions>
              <ActionButton type="button" $tone="#78ec7c">LOGIN</ActionButton>
              <ActionButton type="button" $tone="#ff8a7c">EXIT</ActionButton>
            </Actions>
          </Frame>
        </DialogBody>
      </Dialog>
    </Screen>
  );
}
